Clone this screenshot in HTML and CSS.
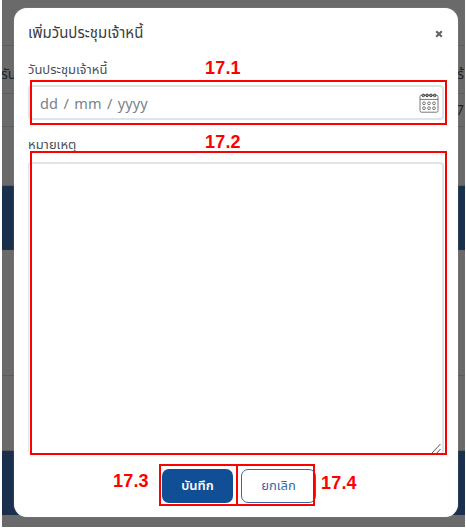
FILE: index.html
```html
<!DOCTYPE html>
<html lang="th">
<head>
<meta charset="utf-8">
<title>เพิ่มวันประชุมเจ้าหนี้</title>
<link rel="stylesheet" href="styles.css">
</head>
<body>
<div class="page">
  <div class="backdrop">
    <div class="row row-top"></div>
    <div class="row row-head"><span class="bg-left">รับ</span><span class="bg-right">อร้</span></div>
    <div class="row row-value"><span class="bg-right">7</span></div>
    <div class="row row-space"></div>
    <div class="band"></div>
    <div class="row row-gap"></div>
    <div class="row row-gap2"></div>
    <div class="band"></div>
  </div>
  <section class="modal">
    <header class="modal-head">
      <h1 class="title"><span>เพิ่มวันประชุมเจ้าหนี้</span></h1>
      <svg class="close" viewBox="0 0 8 8"><path d="M1.2 1.2l5.6 5.6M6.8 1.2L1.2 6.8"/></svg>
    </header>
    <div class="label label-date"><span>วันประชุมเจ้าหนี้</span></div>
    <div class="field date">
      <span class="placeholder">dd / mm / yyyy</span>
      <svg class="calendar" viewBox="0 0 20 20">
        <rect x="1" y="2.2" width="18" height="17" rx="1.5"/>
        <path d="M1 6.4h18"/>
        <g class="ring"><circle cx="4.3" cy="2.4" r="1.3"/><circle cx="8.1" cy="2.4" r="1.3"/><circle cx="11.9" cy="2.4" r="1.3"/><circle cx="15.7" cy="2.4" r="1.3"/></g>
        <g class="days"><circle cx="5" cy="10.3" r="1.4"/><circle cx="10" cy="10.3" r="1.4"/><circle cx="15" cy="10.3" r="1.4"/><circle cx="5" cy="15.2" r="1.4"/><circle cx="10" cy="15.2" r="1.4"/><circle cx="15" cy="15.2" r="1.4"/></g>
      </svg>
    </div>
    <div class="label label-note"><span>หมายเหตุ</span></div>
    <div class="field note">
      <svg class="grip" viewBox="0 0 11 11"><path d="M.5 10.5l9-9.5M5.5 10.5l4-4.5"/></svg>
    </div>
    <footer class="actions">
      <button class="btn save"><span>บันทึก</span></button>
      <button class="btn cancel"><span>ยกเลิก</span></button>
    </footer>
  </section>
  <div class="mark mark-1"></div><b class="num num-1">17.1</b>
  <div class="mark mark-2"></div><b class="num num-2">17.2</b>
  <div class="mark mark-3"></div><b class="num num-3">17.3</b>
  <div class="mark mark-4"></div><b class="num num-4">17.4</b>
</div>
</body>
</html>
```

FILE: styles.css
```css
* { box-sizing: border-box; }
body { margin: 0; background: #fff; font-family: "Noto Sans Thai", "Prompt", "Noto Sans", sans-serif; }
.page { position: relative; width: 466px; height: 528px; padding: 0 1px 0 2px; overflow: hidden; }
.backdrop { height: 527px; background: #696a69; color: #1b222b; font-size: 14px; overflow: hidden; }
.row { display: flex; justify-content: space-between; align-items: center; border-bottom: 1px solid #5b5c5c; }
.row-top { height: 46px; }
.row-head { height: 48px; padding-top: 9px; }
.row-value { height: 33px; }
.row-space { height: 59px; }
.row-gap { height: 126px; }
.row-gap2 { height: 75px; }
.band { height: 64px; background: #1a304c; }
.bg-left { margin-left: -1px; }
.bg-right { margin-left: auto; padding-right: 1px; white-space: nowrap; }
.modal { position: absolute; left: 14px; top: 8px; width: 444px; height: 509px; padding: 0 14px; display: flex; flex-direction: column; background: #fff; border-radius: 13px; color: #3a3d42; box-shadow: 0 0 1px #bbb; }
.modal-head { height: 50px; display: flex; justify-content: space-between; align-items: center; }
.title { margin: 0; padding-top: 2px; font-size: 15px; font-weight: 400; line-height: 30px; white-space: nowrap; }
.close { width: 8px; height: 8px; margin: 1px 1px 0 0; }
.close path { fill: none; stroke: #666; stroke-width: 2.2; }
.label { font-size: 13px; line-height: 22px; white-space: nowrap; color: #4b4f54; }
.label-date { height: 27px; padding-top: 1px; }
.label-note { height: 42px; padding-top: 14px; }
.field { width: 416px; border: 2px solid #dfe4e8; border-radius: 4px; background: #fff; }
.date { height: 35px; display: flex; align-items: center; justify-content: space-between; padding: 0 3px 0 10px; }
.placeholder { font: 14.5px/22px "Noto Sans", sans-serif; letter-spacing: .1px; word-spacing: 1.5px; color: #7a828a; white-space: nowrap; }
.calendar { width: 20px; height: 20px; fill: none; stroke: #777; stroke-width: 1; }
.calendar .ring { stroke: #333; }
.days { stroke: #777; }
.note { height: 292px; border-left-width: 1px; border-bottom-width: 0; display: flex; align-items: flex-end; justify-content: flex-end; }
.grip { width: 11px; height: 11px; fill: none; stroke: #444; stroke-width: .9; }
.actions { display: flex; gap: 8px; padding: 15px 0 0 134px; }
.btn { height: 34px; padding: 0; border-radius: 7px; font: 13px/20px "Noto Sans Thai", "Prompt", "Noto Sans", sans-serif; white-space: nowrap; }
.save { width: 71px; border: 0; background: #104e96; color: #fff; font-weight: 600; }
.cancel { width: 75px; border: 1.5px solid #3768a5; background: #fff; color: #3768a5; }
.mark { position: absolute; border: 2px solid #f00; }
.mark-1 { left: 30px; top: 80px; width: 417px; height: 45px; }
.mark-2 { left: 30px; top: 151px; width: 417px; height: 304px; }
.mark-3 { left: 159px; top: 464px; width: 79px; height: 42px; }
.mark-4 { left: 236px; top: 464px; width: 79px; height: 42px; }
.num { position: absolute; font: bold 18px/20px "Liberation Sans", sans-serif; letter-spacing: .2px; color: #f00; }
.num-1 { left: 205px; top: 58px; }
.num-2 { left: 205px; top: 132px; }
.num-3 { left: 113px; top: 471px; }
.num-4 { left: 321px; top: 473px; }
```
